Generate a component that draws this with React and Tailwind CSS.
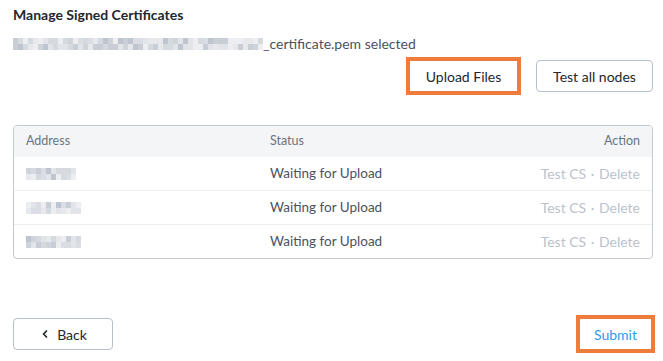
import React from "react";
import { ChevronLeft } from "lucide-react";

// blurred (pixelated) placeholder text
const shades = [
  "bg-[#e1e4e9]",
  "bg-[#d5d9e0]",
  "bg-[#c8cdd6]",
  "bg-[#dadde3]",
  "bg-[#e6e8ec]",
  "bg-[#cfd3da]",
  "bg-[#bfc5cf]",
  "bg-[#eceef1]",
];

function hash(n) {
  let x = Math.imul(n ^ 0x9e3779b9, 0x85ebca6b);
  x ^= x >>> 13;
  x = Math.imul(x, 0xc2b2ae35);
  x ^= x >>> 16;
  return x >>> 0;
}

function Mosaic({ cols, seed }) {
  return (
    <div className="flex flex-col">
      {[0, 1].map((r) => (
        <div key={r} className="flex">
          {Array.from({ length: cols }).map((_, i) => {
            const k = hash(seed * 1000 + r * 100 + i) % shades.length;
            return <div key={i} className={`w-[5px] h-[6px] ${shades[k]}`} />;
          })}
        </div>
      ))}
    </div>
  );
}

const rows = [
  { seed: 1, cols: 10 },
  { seed: 2, cols: 11 },
  { seed: 3, cols: 11 },
];

function App() {
  return (
    <div className="w-[663px] h-[361px] bg-white flex flex-col pl-[13px] pr-[10px] font-['Lato',sans-serif] text-[#4a5260]">
      <h1 className="mt-[6px] text-[14px] leading-[18px] font-bold text-[#23272f]">
        Manage Signed Certificates
      </h1>

      <div className="mt-[12px] flex items-center text-[14px] leading-[16px] text-[#4a5260]">
        <Mosaic cols={50} seed={4} />
        <span>_certificate.pem selected</span>
      </div>

      <div className="mt-[5px] flex justify-end items-center gap-[15px]">
        <button className="w-[115px] h-[38px] border-[4px] border-[#ef7c3c] bg-white text-[14px] text-[#23272f]">
          Upload Files
        </button>
        <button className="w-[117px] h-[32px] rounded-[4px] border border-[#b7bfcc] bg-white text-[14px] text-[#23272f]">
          Test all nodes
        </button>
      </div>

      <div className="mt-[30px] border border-[#c3c9d3] rounded-[4px] overflow-hidden">
        <div className="h-[31px] bg-[#f4f5f7] flex items-center px-[12px] text-[12.5px] text-[#6b7380]">
          <div className="w-[244px]">Address</div>
          <div className="flex-1">Status</div>
          <div>Action</div>
        </div>
        {rows.map((row, i) => (
          <div
            key={i}
            className={`flex items-center px-[12px] ${
              i > 0 ? "h-[34px] border-t border-[#eceef1]" : "h-[33px]"
            }`}
          >
            <div className="w-[244px]">
              <Mosaic cols={row.cols} seed={row.seed} />
            </div>
            <div className="flex-1 text-[13.5px] text-[#4a5260]">Waiting for Upload</div>
            <div className="text-[14px] text-[#bcc2cb]">
              Test CS <span className="mx-[1px]">·</span> Delete
            </div>
          </div>
        ))}
      </div>

      <div className="mt-auto mb-[8px] flex justify-between items-center">
        <button className="w-[100px] h-[32px] rounded-[4px] border border-[#b7bfcc] bg-white text-[14px] text-[#23272f] flex items-center justify-center gap-[6px]">
          <ChevronLeft size={12} strokeWidth={3.5} />
          Back
        </button>
        <button className="w-[79px] h-[38px] mr-[-2px] border-[4px] border-[#ef7c3c] bg-white text-[14px] text-[#2b9af3]">
          Submit
        </button>
      </div>
    </div>
  );
}

export default App;
